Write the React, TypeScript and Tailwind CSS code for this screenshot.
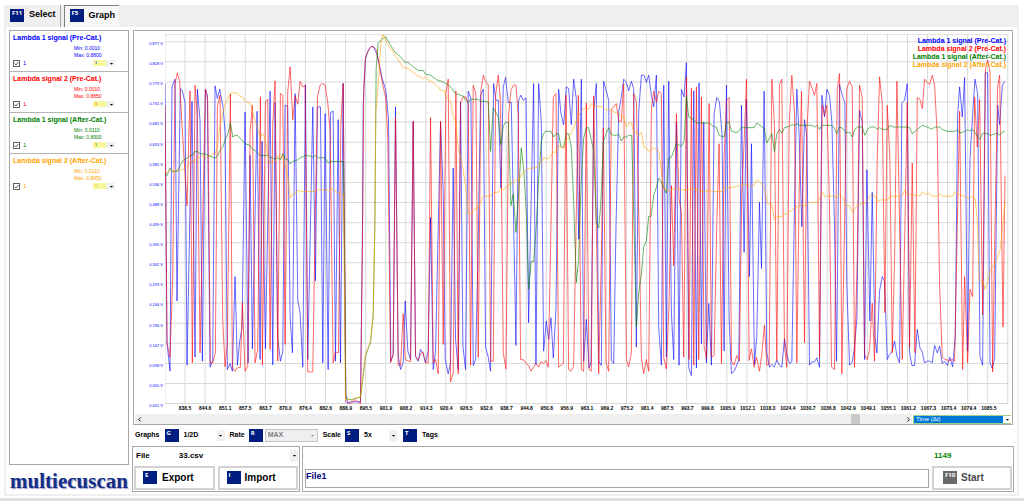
import React, { useState } from "react";
import { FaCaretDown } from "react-icons/fa";
import { FiChevronLeft, FiChevronRight } from "react-icons/fi";

interface Signal {
  name: string;
  min: string;
  max: string;
  text: string;
  stroke: string;
  points: string;
}

interface SelectBoxProps {
  label: string;
  options: string[];
  className: string;
  arrowClassName?: string;
  disabled?: boolean;
}

const signals: Signal[] = [
  {
    name: "Lambda 1 signal (Pre-Cat.)",
    min: "0.0010",
    max: "0.8800",
    text: "text-[#0000ff]",
    stroke: "#0000ff",
    points:
      "106,175 112,950 121,1035 127,185 136,162 142,825 152,190 158,197 166,232 172,1017 187,228 196,993 203,192 211,285 218,1005 227,192 233,210 241,1023 249,1003 256,182 263,220 270,192 280,245 286,320 293,1030 301,1012 308,1035 316,752 323,1017 330,945 337,905 346,260 355,1010 361,390 368,968 382,258 391,1000 397,348 407,968 421,198 429,1016 436,232 444,935 452,1005 459,975 466,240 474,243 481,870 488,980 496,205 504,825 511,860 519,1023 527,180 534,1000 549,245 557,765 563,245 572,245 579,1010 586,265 595,1030 602,262 610,258 617,1005 625,283 632,1010 640,175 648,1108 654,1130 665,1126 680,1127 692,1126 698,600 700,240 707,100 716,75 724,65 731,65 740,85 747,110 757,160 768,195 776,280 783,1005 790,985 797,245 805,990 812,1030 820,1010 826,825 834,975 842,1000 850,288 857,990 865,1005 872,970 879,980 887,1010 895,975 902,575 910,1030 917,975 932,290 940,500 946,1000 955,1043 962,1010 970,428 977,940 985,1030 992,230 999,960 1007,1030 1015,198 1023,220 1030,1018 1037,1000 1044,700 1052,210 1060,192 1067,963 1075,993 1082,1035 1091,175 1098,225 1105,225 1113,488 1120,185 1127,157 1135,232 1144,232 1150,530 1158,958 1166,225 1173,210 1180,225 1188,218 1196,890 1211,175 1218,1015 1226,175 1234,290 1241,975 1249,885 1256,940 1263,875 1270,995 1278,850 1286,192 1293,265 1301,298 1309,185 1316,190 1324,298 1331,162 1339,220 1346,640 1354,162 1361,1005 1369,880 1377,1025 1383,1010 1391,260 1399,175 1406,1005 1414,1018 1421,168 1429,198 1436,225 1444,1002 1451,1012 1458,600 1466,260 1474,215 1481,162 1489,172 1496,197 1504,168 1511,190 1519,963 1526,260 1534,150 1542,150 1549,172 1556,150 1564,210 1571,245 1579,150 1586,905 1594,1017 1601,180 1609,993 1616,168 1624,860 1631,1000 1639,290 1647,1017 1654,192 1662,215 1669,113 1676,1025 1684,1048 1691,197 1699,1025 1707,173 1714,953 1721,290 1729,1010 1736,832 1744,1017 1752,265 1760,217 1768,230 1776,330 1782,975 1789,180 1797,880 1804,1042 1812,1035 1819,1020 1826,1000 1834,240 1842,680 1849,222 1858,752 1864,355 1873,1015 1880,930 1888,530 1894,728 1902,198 1910,980 1918,1023 1925,1015 1932,1023 1940,1002 1948,1018 1955,1023 1963,938 1970,985 1978,1012 1985,1007 1992,600 2000,192 2007,330 2015,603 2023,283 2030,330 2038,1017 2045,1007 2053,1007 2060,995 2068,1023 2075,210 2083,275 2090,192 2098,210 2105,290 2113,600 2119,1005 2128,178 2136,210 2144,232 2150,780 2158,1017 2166,1008 2172,970 2180,880 2188,255 2196,290 2203,1000 2210,433 2219,885 2226,500 2234,930 2240,980 2248,795 2256,752 2263,765 2271,1000 2278,985 2286,975 2293,945 2300,990 2308,1010 2315,232 2323,225 2331,175 2338,980 2345,1018 2353,1018 2361,910 2369,965 2376,978 2383,1010 2391,1005 2398,1005 2406,1010 2413,958 2421,980 2428,960 2436,1012 2443,1005 2451,1018 2459,993 2467,1022 2475,930 2482,270 2488,185 2496,275 2503,157 2512,975 2519,400 2527,270 2534,162 2542,205 2549,990 2557,1017 2565,143 2572,143 2579,1010 2586,1027 2593,995 2602,240 2608,298 2616,180 2624,168",
  },
  {
    name: "Lambda signal 2 (Pre-Cat.)",
    min: "0.0010",
    max: "0.8850",
    text: "text-[#ff0000]",
    stroke: "#ff0000",
    points:
      "106,240 112,950 121,993 129,760 136,175 143,143 150,170 157,300 172,540 181,197 188,1010 196,180 203,270 211,980 227,192 234,225 242,1010 249,1010 257,980 263,245 271,210 279,880 286,1022 293,950 302,205 308,1025 316,1035 323,1025 332,1023 338,830 346,1035 354,1020 361,320 368,240 376,1010 384,970 392,215 398,1017 407,230 414,222 421,970 429,300 436,167 444,1005 452,205 459,210 466,955 474,200 481,125 489,283 496,212 504,237 511,168 519,185 526,180 534,1037 542,1037 549,1037 556,600 563,215 571,180 578,175 586,180 594,232 601,320 610,1010 617,977 626,980 633,300 640,175 648,1125 655,1132 665,1130 676,1120 692,1132 698,650 702,180 707,97 716,75 724,65 731,65 740,75 747,115 757,170 768,220 774,340 782,1010 790,985 797,275 805,1017 812,1018 820,863 826,1000 842,1007 850,288 857,990 865,1003 872,985 879,977 887,1010 895,1010 902,277 910,1010 917,1000 925,1043 932,288 940,955 948,205 955,162 962,1067 970,1040 978,197 985,1043 992,230 1000,215 1008,215 1015,235 1022,1017 1030,180 1038,205 1045,993 1053,195 1060,150 1068,170 1075,180 1082,1005 1090,1005 1097,210 1105,150 1112,235 1120,980 1128,1028 1136,270 1143,195 1151,180 1158,180 1165,270 1172,1000 1181,1001 1188,1012 1196,1018 1203,1035 1218,1012 1226,1023 1233,1007 1241,1012 1248,1003 1255,1023 1263,600 1270,215 1278,205 1286,1023 1300,1012 1308,210 1316,1030 1323,1035 1331,1020 1345,210 1354,1030 1361,1035 1369,233 1377,1030 1384,1035 1391,212 1399,600 1406,1043 1414,700 1420,307 1428,1010 1436,1035 1444,252 1451,245 1459,235 1466,288 1474,288 1481,175 1489,1000 1496,1022 1504,980 1511,205 1519,230 1527,600 1534,995 1541,1042 1549,1000 1556,1035 1564,250 1571,198 1579,230 1586,198 1594,205 1601,995 1609,1028 1617,830 1624,480 1631,720 1639,265 1647,520 1654,560 1661,993 1669,155 1677,1000 1684,190 1691,1017 1699,185 1706,1000 1714,215 1722,960 1729,998 1737,235 1744,993 1752,988 1760,600 1767,355 1774,1012 1782,400 1789,225 1797,217 1804,1005 1812,1017 1820,988 1828,1005 1835,500 1842,350 1849,162 1857,1003 1864,968 1872,1023 1879,993 1888,1035 1895,985 1903,897 1910,1017 1917,1015 1925,162 1933,300 1940,1003 1948,178 1955,162 1963,960 1970,1023 1977,300 1985,150 1993,260 2000,1010 2007,500 2014,198 2023,950 2030,320 2038,168 2046,190 2053,210 2060,175 2068,995 2076,240 2083,270 2090,240 2098,540 2104,1022 2113,1030 2121,195 2128,145 2135,1043 2143,600 2150,190 2158,168 2166,185 2173,1023 2181,700 2188,180 2196,215 2203,985 2211,1000 2218,970 2226,832 2233,1005 2241,400 2248,155 2256,235 2264,860 2271,240 2279,400 2286,980 2293,700 2300,168 2308,600 2316,1000 2324,600 2331,232 2338,965 2346,413 2354,980 2361,217 2369,222 2376,250 2383,162 2391,172 2398,178 2406,150 2413,180 2421,330 2428,780 2436,993 2444,1000 2459,1003 2466,1000 2473,1005 2481,600 2488,258 2497,1030 2503,752 2512,1010 2519,790 2527,812 2533,215 2541,365 2548,223 2557,867 2565,135 2572,105 2579,140 2587,1037 2594,600 2602,185 2608,150 2618,903 2624,450",
  },
  {
    name: "Lambda 1 signal (After-Cat.)",
    min: "0.0110",
    max: "0.8900",
    text: "text-[#008000]",
    stroke: "#008000",
    points:
      "106,445 112,450 121,427 128,438 143,438 152,420 160,405 172,398 181,390 188,390 196,378 203,378 211,385 227,385 241,393 256,398 263,393 272,373 280,363 288,340 296,320 302,293 309,335 316,330 323,330 346,355 361,360 368,372 376,375 391,390 414,390 421,397 429,397 436,403 444,397 452,403 459,385 466,400 474,403 481,415 489,408 504,403 511,397 527,390 542,392 549,395 557,390 564,397 586,397 595,413 602,408 641,408 648,1108 652,1118 665,1120 692,1112 698,1065 707,990 716,965 722,950 730,870 735,600 739,130 745,55 754,45 767,35 776,50 785,65 796,82 812,95 826,112 834,112 850,125 865,136 880,136 887,147 902,150 925,167 932,167 940,172 948,175 962,185 978,207 985,207 1000,213 1007,225 1015,232 1022,222 1045,222 1050,227 1075,230 1082,378 1090,247 1098,262 1105,275 1113,358 1120,303 1127,290 1135,292 1143,540 1150,505 1158,620 1166,505 1174,367 1182,440 1189,560 1196,790 1204,705 1211,708 1219,600 1226,460 1234,350 1240,325 1248,318 1263,318 1271,335 1278,325 1286,325 1293,365 1301,365 1309,325 1316,325 1324,365 1331,530 1339,770 1346,700 1353,480 1361,338 1369,307 1376,307 1384,345 1391,375 1399,590 1406,607 1412,540 1420,350 1428,325 1436,307 1444,327 1451,330 1459,330 1466,325 1474,347 1481,335 1489,335 1496,330 1505,330 1512,600 1519,902 1526,800 1534,745 1541,662 1549,645 1556,572 1563,572 1571,510 1579,485 1586,458 1594,470 1601,488 1609,503 1616,398 1624,395 1639,355 1654,362 1662,348 1669,212 1676,275 1691,283 1699,293 1737,293 1750,303 1759,305 1767,330 1782,335 1789,292 1797,290 1804,317 1820,323 1834,307 1872,307 1880,293 1902,310 1910,353 1925,325 1933,378 1940,325 1948,313 1955,323 1963,307 1978,303 1985,298 1993,300 2000,295 2008,300 2045,300 2053,305 2060,300 2068,312 2075,300 2105,300 2113,310 2120,325 2128,305 2136,308 2149,323 2158,320 2166,335 2174,312 2182,305 2196,305 2204,330 2212,312 2220,305 2233,305 2241,312 2248,307 2256,312 2271,312 2279,300 2290,305 2331,305 2338,307 2346,325 2360,313 2376,300 2391,305 2406,312 2413,305 2428,305 2436,312 2451,318 2473,318 2481,313 2489,323 2503,318 2512,313 2519,317 2527,312 2541,333 2549,342 2557,323 2572,325 2580,330 2602,323 2608,330 2616,320 2624,318",
  },
  {
    name: "Lambda signal 2 (After-Cat.)",
    min: "0.0110",
    max: "0.8950",
    text: "text-[#ffa500]",
    stroke: "#ffa500",
    points:
      "106,437 114,440 122,433 135,438 142,433 158,433 173,420 181,413 188,408 196,405 203,397 211,395 219,390 227,397 236,395 250,385 257,385 263,360 271,300 280,260 288,232 296,215 305,203 320,203 330,212 338,215 347,228 362,235 370,265 376,285 384,310 391,335 399,325 407,340 414,390 421,415 429,408 436,408 444,390 452,397 459,390 466,420 474,450 481,517 489,505 497,505 504,493 512,498 550,498 557,493 595,493 600,498 603,487 612,493 625,503 641,506 647,1120 657,1120 668,1122 676,1115 692,1112 707,985 722,945 730,870 735,600 738,260 745,180 753,55 759,28 767,45 776,62 790,80 805,105 820,127 835,130 865,153 880,160 887,155 895,165 910,172 925,185 932,195 942,197 950,215 962,228 970,275 978,290 985,370 993,400 1000,435 1008,490 1015,565 1025,565 1030,553 1045,545 1052,530 1060,512 1082,512 1090,500 1105,500 1112,490 1120,493 1135,480 1143,475 1158,463 1165,465 1181,440 1188,433 1203,428 1219,427 1226,415 1234,412 1241,397 1256,400 1271,380 1280,380 1286,360 1301,370 1308,345 1316,340 1342,280 1351,262 1361,250 1377,250 1384,235 1391,243 1420,245 1429,255 1444,253 1451,260 1466,265 1474,275 1481,275 1489,305 1497,292 1504,292 1511,320 1519,320 1526,330 1534,320 1542,365 1549,368 1556,378 1570,367 1586,378 1594,440 1602,490 1617,497 1625,492 1639,487 1650,493 1677,493 1684,487 1699,493 1722,498 1737,493 1744,498 1775,498 1782,487 1805,487 1820,482 1835,480 1842,475 1849,480 1870,482 1880,463 1892,472 1904,490 1911,533 1925,537 1933,583 1942,573 1955,573 1963,565 1970,565 1992,548 2015,537 2025,542 2038,530 2063,530 2076,500 2084,512 2112,512 2120,517 2128,505 2137,515 2148,540 2158,540 2166,560 2181,540 2188,537 2195,533 2205,533 2225,505 2233,510 2242,527 2250,523 2272,523 2279,512 2315,512 2323,493 2331,505 2368,512 2376,498 2385,505 2398,505 2406,512 2421,512 2428,505 2437,512 2466,512 2474,498 2482,505 2497,510 2510,517 2518,517 2526,512 2535,520 2542,600 2546,763 2557,763 2564,790 2572,770 2580,732 2595,712 2610,670 2617,600 2624,530",
  },
];

const voltages = [
  "0.877", "0.828", "0.779", "0.731", "0.682", "0.633", "0.585", "0.536", "0.488", "0.439",
  "0.390", "0.342", "0.293", "0.244", "0.196", "0.147", "0.098", "0.050", "0.001",
];

const times = [
  "838.5", "844.6", "851.1", "857.5", "863.7", "870.0", "876.4", "882.6", "888.9", "895.5", "901.9",
  "908.2", "914.3", "920.4", "926.5", "932.6", "938.7", "944.8", "950.8", "956.9", "963.1", "969.2",
  "975.2", "981.4", "987.5", "993.7", "999.8", "1005.9", "1012.1", "1018.3", "1024.4", "1030.7",
  "1036.8", "1042.9", "1049.1", "1055.1", "1061.2", "1067.3", "1073.4", "1079.4", "1085.5",
];

const KeyBadge: React.FC<{ children: string; muted?: boolean }> = ({ children, muted }) => (
  <span
    className={`flex h-[13px] w-[14px] shrink-0 justify-start pl-[2px] text-[6px] leading-[9px] font-bold text-white font-['Open_Sans',sans-serif] ${
      muted ? "bg-[#6a6a6a]" : "bg-[#001e80]"
    }`}
  >
    {children}
  </span>
);

const SelectBox: React.FC<SelectBoxProps> = ({ label, options, className, arrowClassName, disabled }) => (
  <span className={`relative flex items-center ${className}`}>
    <select
      aria-label={label}
      disabled={disabled}
      className="h-full w-full appearance-none bg-transparent px-[2px] outline-none"
    >
      {options.map((option) => (
        <option key={option}>{option}</option>
      ))}
    </select>
    <span
      className={`pointer-events-none absolute inset-y-0 right-0 flex w-2 items-center justify-center ${
        arrowClassName ?? "bg-[#efefef] text-black"
      }`}
    >
      <FaCaretDown size={5} />
    </span>
  </span>
);

const SignalCard: React.FC<{ signal: Signal }> = ({ signal }) => {
  const [checked, setChecked] = useState<boolean>(true);

  return (
    <div className={`flex h-[41px] flex-col border-b border-[#b4b4b4] px-[3px] pt-[2px] last:border-b-0 ${signal.text}`}>
      <h2 className="text-[7px] leading-[9px] font-bold whitespace-nowrap">{signal.name}</h2>
      <div className="pt-[3px] pl-[61px] text-[5px] leading-[7px]">
        <p>Min: {signal.min}</p>
        <p>Max: {signal.max}</p>
      </div>
      <div className="flex items-center justify-between pr-[10px]">
        <label className="flex items-center gap-[3px] text-[6px] leading-[8px]">
          <span className="relative flex size-[7px]">
            <input
              type="checkbox"
              checked={checked}
              onChange={(e) => setChecked(e.target.checked)}
              className="size-[7px] appearance-none border border-[#606060] bg-white"
            />
            {checked && (
              <svg viewBox="0 0 7 7" className="pointer-events-none absolute inset-0" fill="none" stroke="#333">
                <path d="M1.6 3.5 L3 5 L5.4 2" strokeWidth="0.8" />
              </svg>
            )}
          </span>
          1
        </label>
        <SelectBox
          label={`${signal.name} scale`}
          options={["1", "2", "5"]}
          className="h-[6px] w-[22px] bg-linear-to-r from-[#f7f79c] from-60% to-[#efefef] to-60% text-[4px] leading-[6px]"
        />
      </div>
    </div>
  );
};

const Chart: React.FC = () => (
  <div className="flex min-h-0 flex-1 pt-[3px] pr-[3px]">
    <div className="flex w-[31px] flex-col items-end justify-between pt-[7px] pr-[2px] pb-[6px] text-[4px] leading-[5px] text-[#0000ff]">
      {voltages.map((v) => (
        <span key={v}>{v} V</span>
      ))}
    </div>
    <div className="flex min-w-0 flex-1 flex-col">
      <div className="relative flex min-h-0 flex-1">
        <svg viewBox="106 27 2530 1106" preserveAspectRatio="none" className="h-full w-full" fill="none">
          <g stroke="#d9d9d9" strokeWidth="3">
            {Array.from({ length: 43 }, (_, i) => (
              <line key={i} x1={106 + i * 60.15} x2={106 + i * 60.15} y1="27" y2="1133" />
            ))}
            <line x1="106" x2="2636" y1="28" y2="28" />
            {Array.from({ length: 19 }, (_, i) => (
              <line key={i} x1="106" x2="2636" y1={50 + i * 60.1} y2={50 + i * 60.1} />
            ))}
          </g>
          {signals.map((s) => (
            <polyline key={s.name} points={s.points} stroke={s.stroke} strokeWidth="2.2" strokeOpacity="0.8" />
          ))}
        </svg>
        <ul className="absolute top-[3px] right-[3px] text-right text-[7px] leading-[8px] font-bold">
          {signals.map((s) => (
            <li key={s.name} className={s.text}>
              {s.name}
            </li>
          ))}
        </ul>
      </div>
      <div className="flex pt-px pr-[10px] pb-[3px] pl-[10px] text-[5px] leading-[6px] font-bold text-black">
        {times.map((t) => (
          <span key={t} className="w-0 flex-1 text-center">
            {t}
          </span>
        ))}
      </div>
    </div>
  </div>
);

const App: React.FC = () => {
  const [position, setPosition] = useState<number>(941);
  const [file, setFile] = useState<string>("File1");

  return (
    <div className="flex h-screen min-h-[400px] flex-col bg-white pt-[5px] font-['Liberation_Sans',Arial,sans-serif] text-black">
      <div className="mr-[5px] ml-1 flex min-h-0 flex-1 flex-col border-x-2 border-b-2 border-[#efefef]">
        {/* Tabs */}
        <nav className="flex h-[22px] shrink-0 bg-[#efefef] pl-[3px] text-[9px] font-bold">
          <button type="button" className="flex items-center gap-[5px] border-r border-[#a8a8a8] pr-1 pb-[2px] pl-px">
            <KeyBadge>F11</KeyBadge>
            Select
          </button>
          <button
            type="button"
            className="ml-[3px] flex items-center gap-[5px] border-t border-l border-[#808080] bg-[#f7f7f7] pr-1 pb-[2px] pl-[5px]"
          >
            <KeyBadge>F5</KeyBadge>
            Graph
          </button>
        </nav>

        <div className="flex min-h-0 flex-1 pt-[3px] pl-[3px]">
          {/* Signals */}
          <aside className="flex w-[120px] shrink-0 flex-col">
            <div className="flex-1 border border-[#a8a8a8]">
              {signals.map((s) => (
                <SignalCard key={s.name} signal={s} />
              ))}
            </div>
            <div className="h-[29px] text-center text-[21px] leading-[33px] font-bold text-[#142e86] font-['Liberation_Serif',serif] [text-shadow:1px_1px_1px_#9aa6cc]">
              multiecuscan
            </div>
          </aside>

          <main className="flex min-w-0 flex-1 flex-col pr-[2px] pl-[3px]">
            <section className="mr-[2px] ml-px flex min-h-0 flex-1 flex-col border border-[#a8a8a8]">
              <Chart />
              <div className="flex h-[10px] shrink-0 items-center pr-px pl-px">
                <div className="flex h-full flex-1 items-center bg-[#efefef]">
                  <button type="button" aria-label="Scroll left" className="flex w-2 justify-center">
                    <FiChevronLeft size={7} strokeWidth={3} />
                  </button>
                  <input
                    type="range"
                    aria-label="Scroll position"
                    min={0}
                    max={1000}
                    value={position}
                    onChange={(e) => setPosition(Number(e.target.value))}
                    className="h-[10px] min-w-0 flex-1 appearance-none bg-transparent [&::-webkit-slider-thumb]:h-[10px] [&::-webkit-slider-thumb]:w-[9px] [&::-webkit-slider-thumb]:appearance-none [&::-webkit-slider-thumb]:bg-[#c9c9c9]"
                  />
                  <button type="button" aria-label="Scroll right" className="flex w-2 justify-center">
                    <FiChevronRight size={7} strokeWidth={3} />
                  </button>
                </div>
                <SelectBox
                  label="X axis"
                  options={["Time (Δt)", "Time"]}
                  className="ml-px h-[9px] w-[98px] border border-r-0 border-[#9fd08a] bg-[#0078d7] text-[6px] leading-[7px] text-white"
                  arrowClassName="bg-white text-black"
                />
              </div>
            </section>

            {/* Graph options */}
            <div className="flex h-[21px] shrink-0 items-center pl-[3px] text-[7px] font-bold">
              <span>Graphs</span>
              <span className="ml-[5px]">
                <KeyBadge>G</KeyBadge>
              </span>
              <SelectBox label="Graphs" options={["1/2D", "1D", "2D"]} className="ml-[3px] h-[11px] w-[43px]" />
              <span className="ml-[5px]">Rate</span>
              <span className="ml-1">
                <KeyBadge>R</KeyBadge>
              </span>
              <SelectBox
                label="Rate"
                options={["MAX", "MIN"]}
                className="ml-[2px] h-[13px] w-[53px] border border-[#c4c4c4] bg-[#efefef] text-[#808080]"
                arrowClassName="text-[#909090]"
                disabled
              />
              <span className="ml-[5px]">Scale</span>
              <span className="ml-1">
                <KeyBadge>S</KeyBadge>
              </span>
              <SelectBox label="Scale" options={["5x", "1x", "10x"]} className="ml-[3px] h-[11px] w-[35px]" />
              <button type="button" className="ml-[6px] flex items-center gap-[5px]">
                <KeyBadge>T</KeyBadge>
                Tags
              </button>
            </div>

            <div className="mr-px mb-[2px] flex shrink-0 gap-[2px]">
              {/* File picker */}
              <section className="flex h-[46px] w-[168px] shrink-0 flex-col justify-between border border-[#a8a8a8] p-px text-[8px] font-bold">
                <div className="flex h-[15px] items-center pl-[2px]">
                  <span>File</span>
                  <SelectBox label="File" options={["33.csv"]} className="ml-[27px] h-[12px] flex-1" />
                </div>
                <div className="flex gap-[3px] text-[10px]">
                  <button type="button" className="flex h-[24px] flex-1 items-center gap-[5px] border-2 border-[#d2d2d2] pb-px pl-[7px]">
                    <KeyBadge>E</KeyBadge>
                    Export
                  </button>
                  <button type="button" className="flex h-[24px] flex-1 items-center gap-[4px] border-2 border-[#d2d2d2] pb-px pl-[7px]">
                    <KeyBadge>I</KeyBadge>
                    Import
                  </button>
                </div>
              </section>

              {/* Recording */}
              <section className="flex h-[46px] min-w-0 flex-1 items-end gap-[3px] border border-[#a8a8a8] p-px pl-[2px]">
                <input
                  type="text"
                  aria-label="File name"
                  value={file}
                  onChange={(e) => setFile(e.target.value)}
                  className="mb-[2px] h-[19px] min-w-0 flex-1 border border-[#a8a8a8] pb-[5px] text-[9px] font-bold text-[#000080] outline-none"
                />
                <div className="flex h-full w-[80px] shrink-0 flex-col justify-between">
                  <span className="pt-[2px] pl-[2px] text-[8px] leading-[12px] font-bold text-[#008000]">1149</span>
                  <button
                    type="button"
                    className="flex h-[24px] items-center gap-[4px] border-2 border-[#d2d2d2] pb-px pl-[9px] text-[10px] font-bold text-[#4a4a4a]"
                  >
                    <KeyBadge muted>F10</KeyBadge>
                    Start
                  </button>
                </div>
              </section>
            </div>
          </main>
        </div>
      </div>
      <footer className="mt-[2px] h-[3px] shrink-0 bg-[#dfdfdf]" />
    </div>
  );
};

export default App;
